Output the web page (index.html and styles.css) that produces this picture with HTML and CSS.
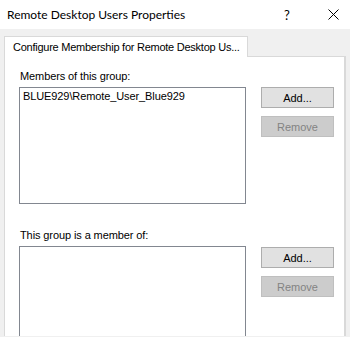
FILE: index.html
```
<!DOCTYPE html>
<html>

<head>
  <link rel="stylesheet" href="styles.css">
</head>

<body>
  <div class="titlebar">
    <span class="title">Remote Desktop Users Properties</span>
    <span class="help">?</span>
    <span class="close">
      <svg width="11" height="11" viewBox="0 0 11 11">
        <path d="M0.5 0.5 L10.5 10.5 M10.5 0.5 L0.5 10.5" stroke="#000" stroke-width="1" fill="none" />
      </svg>
    </span>
  </div>

  <div class="tabs">
    <div class="tab">Configure Membership for Remote Desktop Us...</div>
  </div>

  <div class="page">
    <div class="label">Members of this group:</div>
    <div class="row">
      <div class="list">
        <div class="item">BLUE929\Remote_User_Blue929</div>
      </div>
      <div class="buttons">
        <button class="btn">Add...</button>
        <button class="btn" disabled>Remove</button>
      </div>
    </div>

    <div class="label second">This group is a member of:</div>
    <div class="row">
      <div class="list tall"></div>
      <div class="buttons shifted">
        <button class="btn">Add...</button>
        <button class="btn" disabled>Remove</button>
      </div>
    </div>
  </div>
</body>

</html>
```

FILE: styles.css
```
body {
  margin: 0;
  width: 350px;
  height: 337px;
  overflow: hidden;
  background-color: #F0F0F0;
  font-family: "Liberation Sans", Arial, sans-serif;
  font-size: 11px;
  color: #000000;
}

.titlebar {
  height: 29px;
  background-color: #FFFFFF;
  display: flex;
  align-items: center;
  font-family: Lato, "Noto Sans", sans-serif;
  font-size: 12px;
}

.title {
  padding-left: 7px;
  flex: 1;
}

.help {
  width: 34px;
  margin-right: 12px;
  text-align: center;
  font-size: 13px;
}

.close {
  width: 34px;
  display: flex;
  justify-content: center;
}

.tabs {
  display: flex;
  padding-top: 7px;
  padding-left: 4px;
}

.tab {
  width: 234px;
  height: 20px;
  line-height: 20px;
  padding-left: 8px;
  background-color: #FFFFFF;
  border: 1px solid #D9D9D9;
  border-bottom: none;
  margin-bottom: -1px;
  position: relative;
  z-index: 1;
  white-space: nowrap;
  font-size: 11px;
  letter-spacing: -0.25px;
}

.page {
  margin-left: 4px;
  width: 342px;
  height: 280px;
  background-color: #FFFFFF;
  border: 1px solid #D9D9D9;
  border-right-width: 2px;
  border-bottom: none;
  padding: 13px 0 0 14px;
  box-sizing: border-box;
  overflow: hidden;
}

.label {
  height: 13px;
  line-height: 13px;
  margin-bottom: 4px;
  padding-left: 1px;
  letter-spacing: -0.1px;
}

.label.second {
  margin-top: 25px;
}

.row {
  display: flex;
  gap: 15px;
}

.list {
  width: 225px;
  height: 115px;
  border: 1px solid #828790;
  background-color: #FFFFFF;
}

.list.tall {
  height: 110px;
}

.item {
  padding: 2px 0 0 3px;
  line-height: 13px;
  letter-spacing: -0.1px;
}

.buttons {
  display: flex;
  flex-direction: column;
  gap: 8px;
}

.buttons.shifted {
  margin-top: 1px;
}

.btn {
  width: 73px;
  height: 21px;
  padding: 0;
  font-family: "Liberation Sans", Arial, sans-serif;
  font-size: 11px;
  color: #000000;
  background-color: #E1E1E1;
  border: 1px solid #ADADAD;
  border-radius: 0;
}

.btn:disabled {
  color: #838383;
  background-color: #CCCCCC;
  border-color: #BFBFBF;
}
```
